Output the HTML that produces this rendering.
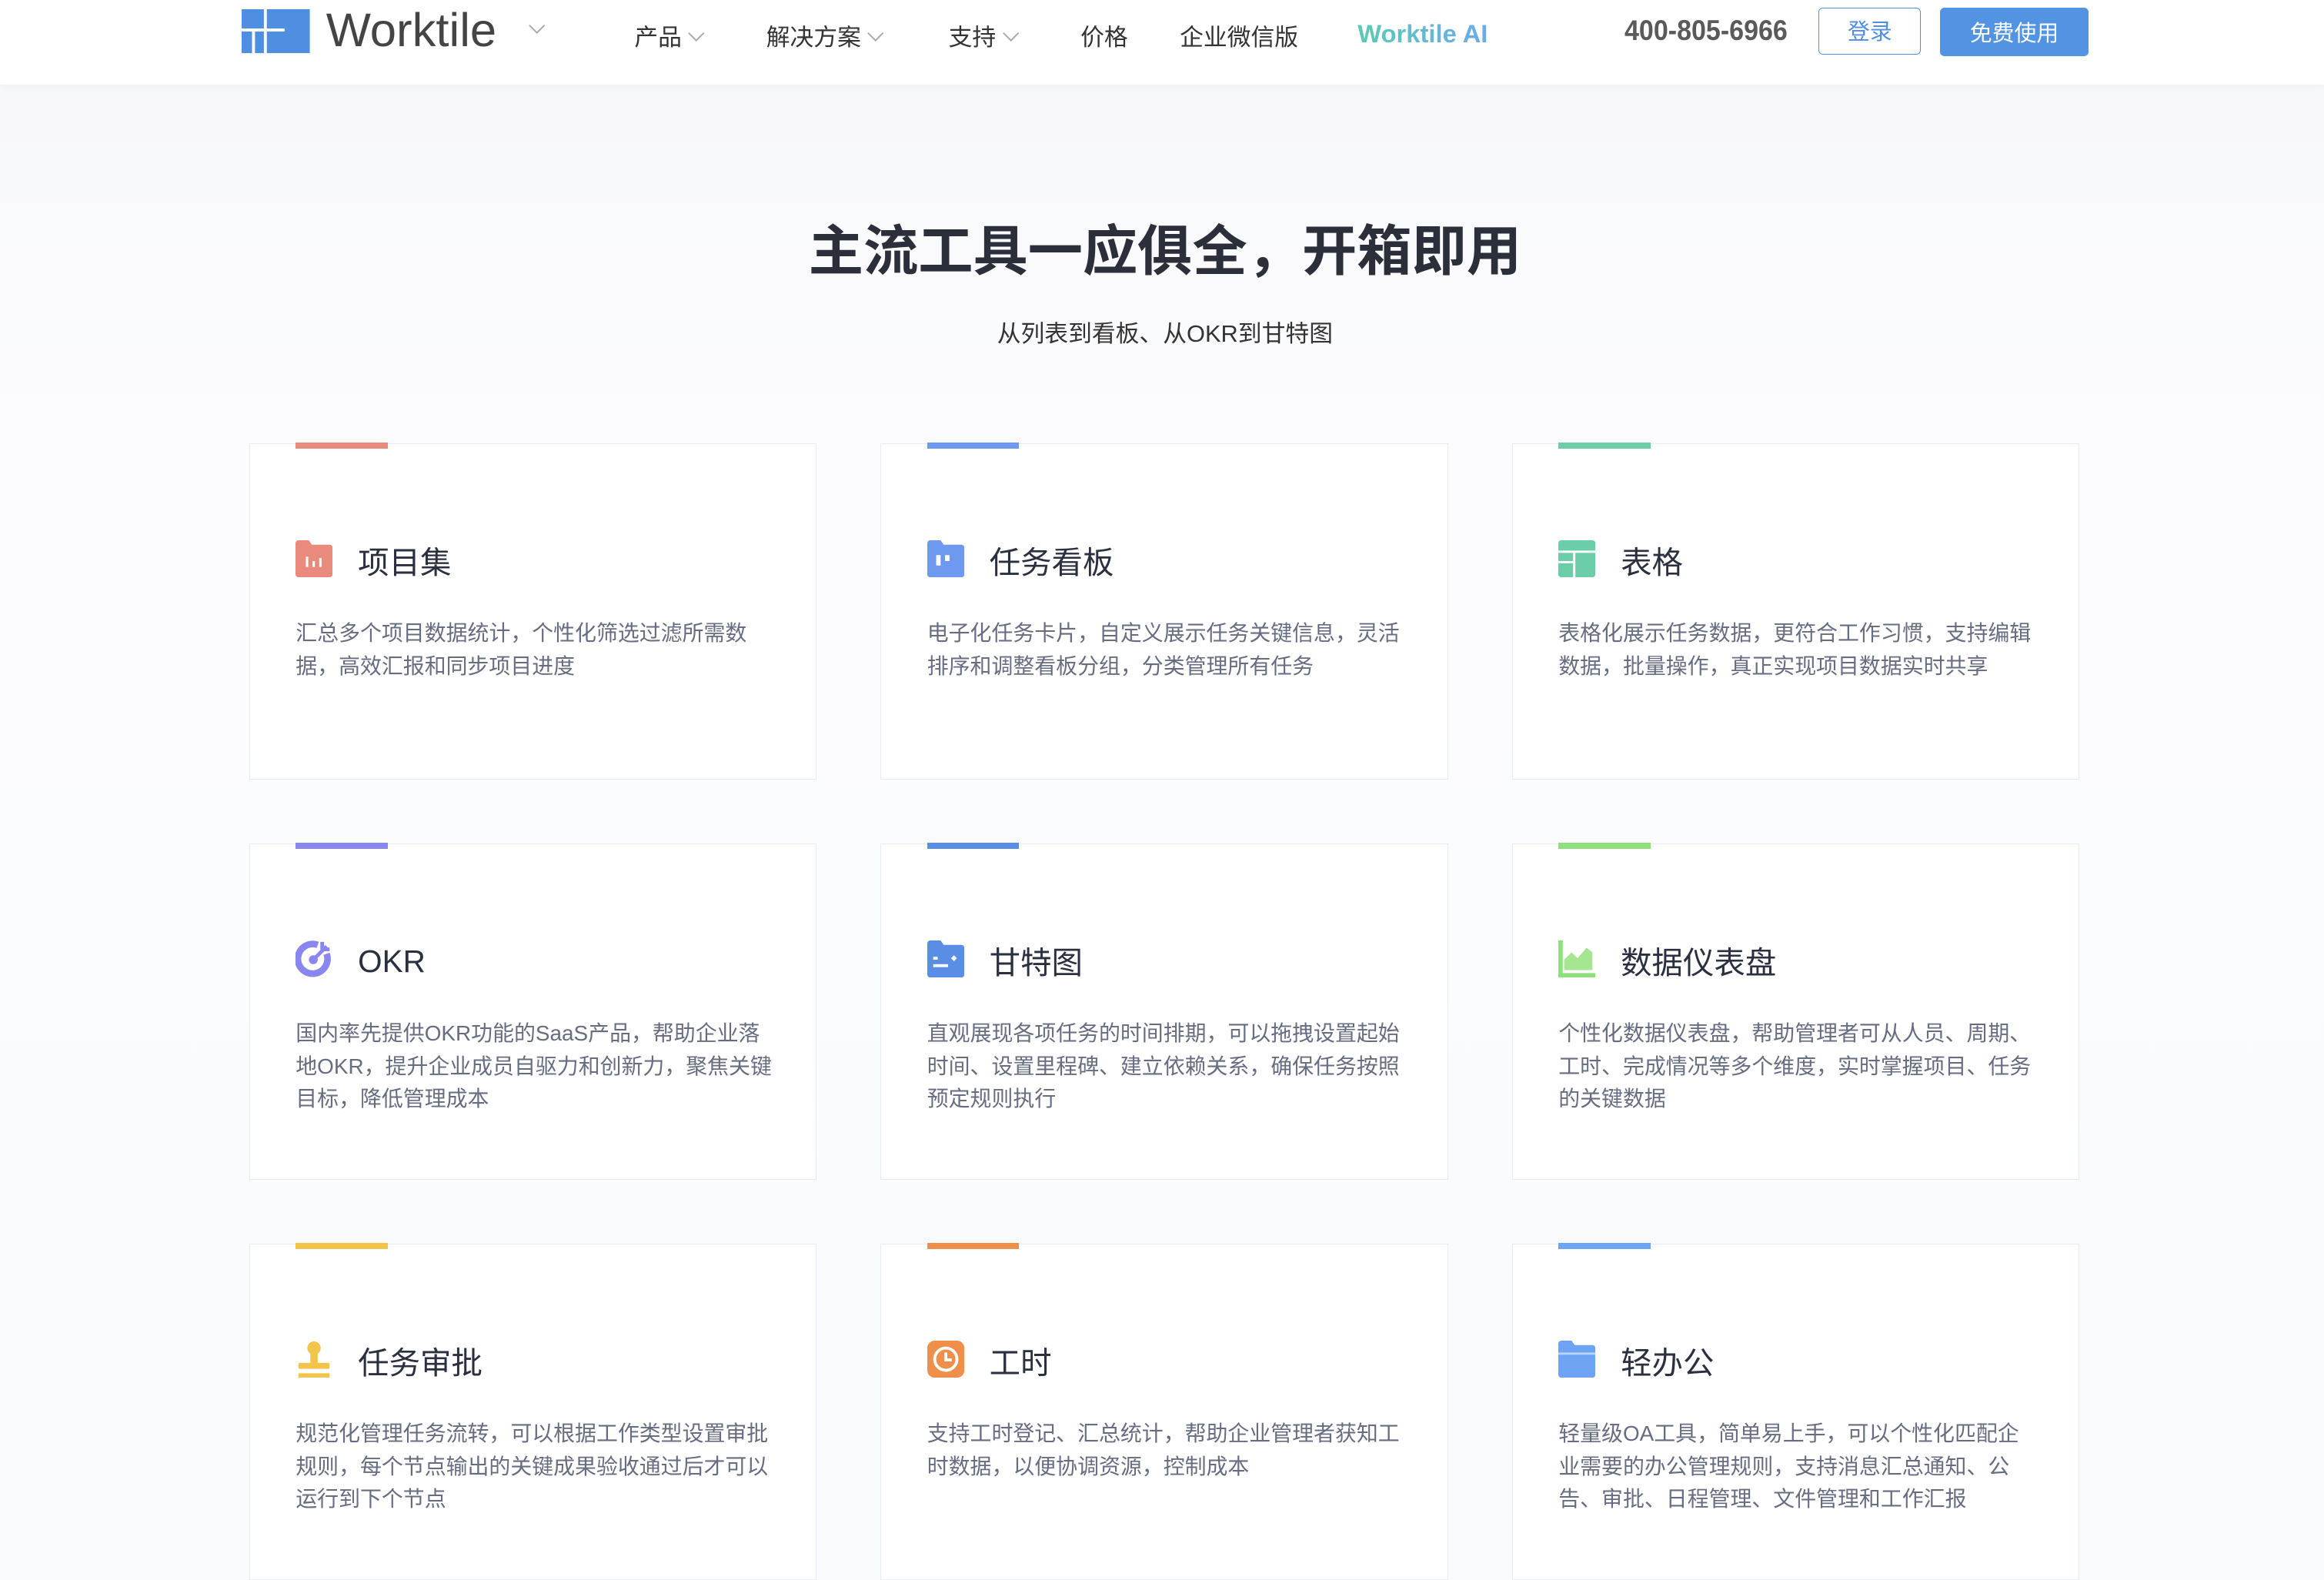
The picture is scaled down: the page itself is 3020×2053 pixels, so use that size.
<!DOCTYPE html>
<html><head><meta charset="utf-8"><style>
html,body{margin:0;padding:0}
body{width:3020px;height:2000px;overflow:hidden;background:#fafbfd;font-family:"Liberation Sans","Noto Sans CJK SC",sans-serif}
#z{zoom:1.92602;width:1568px;height:1039px;position:relative;background:linear-gradient(#f6f7fb,#fcfcfe 300px,#fafbfd)}
.hd{position:absolute;left:0;top:0;width:1568px;height:57px;background:#fff;box-shadow:0 2px 6px rgba(0,0,0,.03)}
.a{position:absolute;white-space:nowrap}
.nav{font-size:16px;color:#333;top:12px}
.car{display:inline-block;width:7px;height:7px;border-right:1.3px solid #aaa;border-bottom:1.3px solid #aaa;transform:rotate(45deg);margin-left:6px;position:relative;top:-4px}
.card{position:absolute;width:382px;height:226px;background:#fff;border:1px solid #e7ebf6}
.bar{position:absolute;left:31px;top:-1px;width:62px;height:4px}
.ic{position:absolute;left:31px;top:65px;width:25px;height:25px}
.t{position:absolute;left:73px;top:63px;font-size:21px;color:#2a3040}
.d{position:absolute;left:31px;top:117px;width:322px;font-size:14.5px;line-height:22px;color:#666d80}
</style></head><body><div id="z">
<div class="hd"></div>
<svg class="a" style="left:163px;top:6px" width="46" height="30" viewBox="0 0 46 30"><rect x="0" y="0" width="15" height="13" fill="#4f8fe2"/><rect x="17" y="0" width="29" height="30" fill="#4f8fe2"/><rect x="0" y="15" width="7" height="15" fill="#4f8fe2"/><rect x="9" y="15" width="6" height="15" fill="#4f8fe2"/><rect x="17" y="13" width="12" height="2" fill="#fff"/></svg>
<div class="a" style="left:220px;top:2px;font-size:32px;color:#444">Worktile</div>
<div class="a" style="left:352px;top:11px"><span class="car"></span></div>
<div class="a nav" style="left:428px">产品<span class="car"></span></div>
<div class="a nav" style="left:517px">解决方案<span class="car"></span></div>
<div class="a nav" style="left:640px">支持<span class="car"></span></div>
<div class="a nav" style="left:729px">价格</div>
<div class="a nav" style="left:796px">企业微信版</div>
<div class="a nav" style="left:916px;top:13px;font-size:17px;font-weight:bold;background:linear-gradient(90deg,#5ccbb0,#6aaaf0);-webkit-background-clip:text;color:transparent">Worktile AI</div>
<div class="a" style="left:1096px;top:10px;font-size:19px;font-weight:bold;color:#5a5a5a;transform:scaleX(.93);transform-origin:left">400-805-6966</div>
<div class="a" style="left:1227px;top:5px;width:68px;height:31px;border:1px solid #4f8fe2;border-radius:3px;color:#4f8fe2;font-size:15px;text-align:center;line-height:33px">登录</div>
<div class="a" style="left:1309px;top:5px;width:100px;height:33px;background:#5294e2;border-radius:3px;color:#fff;font-size:15px;text-align:center;line-height:36px">免费使用</div>
<div class="a" style="left:0;width:1572px;text-align:center;top:139px;font-size:37px;font-weight:bold;color:#2b2f3a">主流工具一应俱全，开箱即用</div>
<div class="a" style="left:0;width:1572px;text-align:center;top:212px;font-size:16px;color:#333">从列表到看板、从OKR到甘特图</div>

<div class="card" style="left:168px;top:299px"><div class="bar" style="background:#e98a7c"></div>
<svg class="ic" viewBox="0 0 25 25"><path d="M0 2a2 2 0 0 1 2-2h7l2 3h12a2 2 0 0 1 2 2v18a2 2 0 0 1-2 2H2a2 2 0 0 1-2-2z" fill="#e98a7c"/><rect x="7" y="11" width="1.6" height="7" fill="#fff"/><rect x="11.5" y="14" width="1.6" height="4" fill="#fff"/><rect x="16" y="12" width="1.6" height="6" fill="#fff"/></svg>
<div class="t">项目集</div><div class="d">汇总多个项目数据统计，个性化筛选过滤所需数据，高效汇报和同步项目进度</div></div>

<div class="card" style="left:594px;top:299px"><div class="bar" style="background:#6e99f0"></div>
<svg class="ic" viewBox="0 0 25 25"><path d="M0 2a2 2 0 0 1 2-2h7l2 3h12a2 2 0 0 1 2 2v18a2 2 0 0 1-2 2H2a2 2 0 0 1-2-2z" fill="#6e99f0"/><rect x="6" y="10" width="3" height="7" fill="#fff"/><rect x="12" y="10" width="3" height="4" fill="#fff"/></svg>
<div class="t">任务看板</div><div class="d">电子化任务卡片，自定义展示任务关键信息，灵活排序和调整看板分组，分类管理所有任务</div></div>

<div class="card" style="left:1020px;top:299px"><div class="bar" style="background:#6ccea9"></div>
<svg class="ic" viewBox="0 0 25 25"><rect width="25" height="25" rx="2" fill="#6ccea9"/><rect x="0" y="7" width="25" height="1.5" fill="#fff"/><rect x="0" y="14" width="10" height="1.5" fill="#fff"/><rect x="10" y="8" width="1.5" height="17" fill="#fff"/></svg>
<div class="t">表格</div><div class="d">表格化展示任务数据，更符合工作习惯，支持编辑数据，批量操作，真正实现项目数据实时共享</div></div>

<div class="card" style="left:168px;top:569px"><div class="bar" style="background:#8a86ef"></div>
<svg class="ic" viewBox="0 0 25 25"><path d="M21 9A10 10 0 1 1 15 3" stroke="#8a86ef" stroke-width="4.5" fill="none"/><circle cx="12" cy="13" r="3" fill="#8a86ef"/><path d="M12 13L21 4M18 1v5h5" stroke="#8a86ef" stroke-width="2.5" fill="none"/></svg>
<div class="t" style="top:67px">OKR</div><div class="d">国内率先提供OKR功能的SaaS产品，帮助企业落地OKR，提升企业成员自驱力和创新力，聚焦关键目标，降低管理成本</div></div>

<div class="card" style="left:594px;top:569px"><div class="bar" style="background:#5a8ee5"></div>
<svg class="ic" viewBox="0 0 25 25"><path d="M0 2a2 2 0 0 1 2-2h7l2 3h12a2 2 0 0 1 2 2v18a2 2 0 0 1-2 2H2a2 2 0 0 1-2-2z" fill="#5a8ee5"/><rect x="4" y="11" width="3" height="2" fill="#fff"/><rect x="4" y="16" width="10" height="2" fill="#fff"/><path d="M16 12l2-2 2 2-2 2z" fill="#fff"/></svg>
<div class="t">甘特图</div><div class="d">直观展现各项任务的时间排期，可以拖拽设置起始时间、设置里程碑、建立依赖关系，确保任务按照预定规则执行</div></div>

<div class="card" style="left:1020px;top:569px"><div class="bar" style="background:#8fe07d"></div>
<svg class="ic" viewBox="0 0 25 25"><path d="M0 0h3v22h22v3H0z" fill="#8fe07d"/><path d="M4 20V13l5-5 4 4 6-7 4 3v12z" fill="#a5e690"/></svg>
<div class="t">数据仪表盘</div><div class="d">个性化数据仪表盘，帮助管理者可从人员、周期、工时、完成情况等多个维度，实时掌握项目、任务的关键数据</div></div>

<div class="card" style="left:168px;top:839px"><div class="bar" style="background:#f3c44c"></div>
<svg class="ic" viewBox="0 0 25 25"><circle cx="12.5" cy="5" r="4.5" fill="#f3c44c"/><rect x="10" y="8" width="5" height="8" fill="#f3c44c"/><rect x="2" y="15" width="21" height="4" rx="1" fill="#f3c44c"/><rect x="2" y="22" width="21" height="3" fill="#f3c44c"/></svg>
<div class="t">任务审批</div><div class="d">规范化管理任务流转，可以根据工作类型设置审批规则，每个节点输出的关键成果验收通过后才可以运行到下个节点</div></div>

<div class="card" style="left:594px;top:839px"><div class="bar" style="background:#f08f4a"></div>
<svg class="ic" viewBox="0 0 25 25"><rect width="25" height="25" rx="5" fill="#f08f4a"/><circle cx="12.5" cy="12.5" r="7.5" fill="none" stroke="#fff" stroke-width="2"/><path d="M12.5 8v5h4" stroke="#fff" stroke-width="2" fill="none"/></svg>
<div class="t">工时</div><div class="d">支持工时登记、汇总统计，帮助企业管理者获知工时数据，以便协调资源，控制成本</div></div>

<div class="card" style="left:1020px;top:839px"><div class="bar" style="background:#6ea4f3"></div>
<svg class="ic" viewBox="0 0 25 25"><path d="M0 2a2 2 0 0 1 2-2h7l2 3h12a2 2 0 0 1 2 2v18a2 2 0 0 1-2 2H2a2 2 0 0 1-2-2z" fill="#6ea4f3"/><rect x="0" y="8" width="25" height="1.5" fill="#b8d4fa"/></svg>
<div class="t">轻办公</div><div class="d" style="width:314px">轻量级OA工具，简单易上手，可以个性化匹配企业需要的办公管理规则，支持消息汇总通知、公告、审批、日程管理、文件管理和工作汇报</div></div>
</div></body></html>
